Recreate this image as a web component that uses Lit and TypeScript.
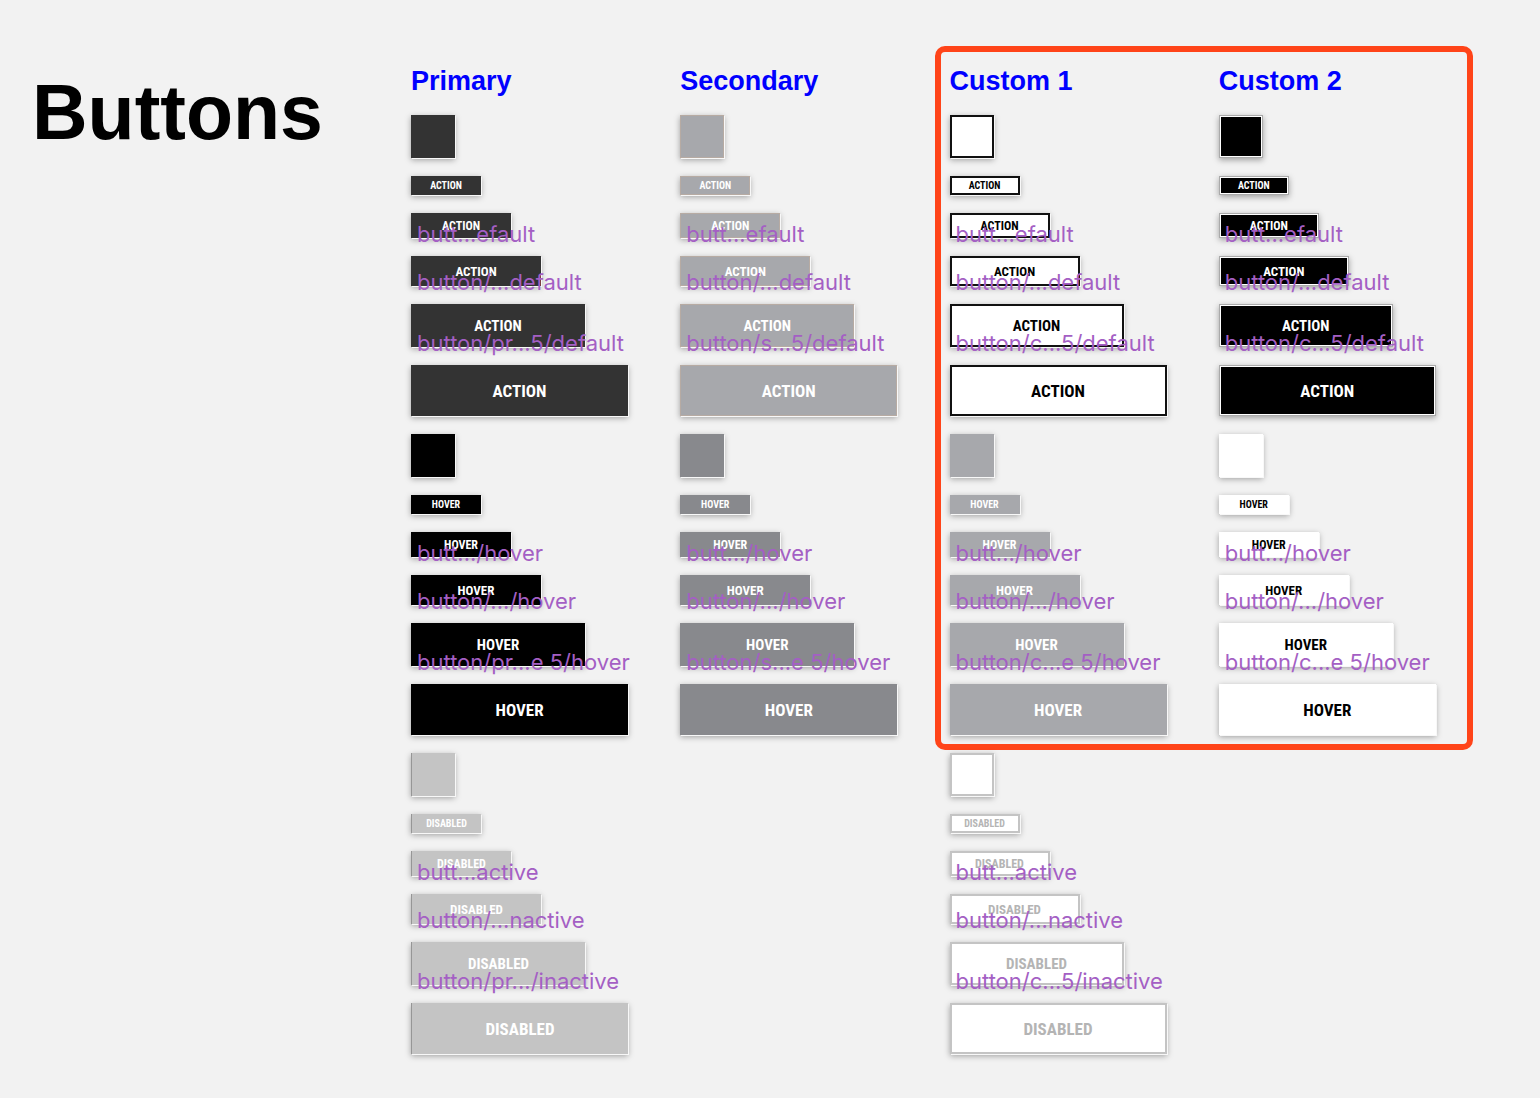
import { LitElement, html, css, nothing } from "lit";
import { customElement, property } from "lit/decorators.js";

type Variant = "primary" | "secondary" | "custom1" | "custom2";
type State = "default" | "hover" | "inactive";

interface Group {
  variant: Variant;
  state: State;
  text: string;
  /** Names of the third, fourth and fifth button, shortened. */
  names: string[];
}

const headings = ["Primary", "Secondary", "Custom 1", "Custom 2"];

const group = (variant: Variant, state: State, text: string, last: string): Group => {
  const names: Record<State, string[]> = {
    default: ["butt...efault", "button/...default"],
    hover: ["butt.../hover", "button/.../hover"],
    inactive: ["butt...active", "button/...nactive"],
  };
  return { variant, state, text, names: [...names[state], last] };
};

const groups: Group[] = [
  group("primary", "default", "ACTION", "button/pr...5/default"),
  group("secondary", "default", "ACTION", "button/s...5/default"),
  group("custom1", "default", "ACTION", "button/c...5/default"),
  group("custom2", "default", "ACTION", "button/c...5/default"),
  group("primary", "hover", "HOVER", "button/pr...e 5/hover"),
  group("secondary", "hover", "HOVER", "button/s...e 5/hover"),
  group("custom1", "hover", "HOVER", "button/c...e 5/hover"),
  group("custom2", "hover", "HOVER", "button/c...e 5/hover"),
  group("primary", "inactive", "DISABLED", "button/pr.../inactive"),
  group("custom1", "inactive", "DISABLED", "button/c...5/inactive"),
];

@customElement("button-stack")
class ButtonStack extends LitElement {
  @property({ attribute: false }) data!: Group;

  static styles = css`
    :host {
      display: block;
    }
    .stack {
      display: flex;
      flex-direction: column;
      align-items: flex-start;
      gap: 18px;
    }
    .slot {
      position: relative;
      display: flex;
    }
    .name {
      position: absolute;
      left: 6px;
      bottom: -11px;
      font: 400 22px/30px Inter, sans-serif;
      color: #a45fc4;
      white-space: nowrap;
      pointer-events: none;
    }
    .btn {
      display: flex;
      align-items: center;
      justify-content: center;
      box-sizing: border-box;
      margin: 0;
      padding: 0;
      border: 0;
      border-radius: 0;
      font-family: "Roboto Condensed", Roboto, sans-serif;
      font-weight: 700;
      color: #fff;
      box-shadow: 1px 1px 0 #f8f8f8, 0 2px 6px rgba(0, 0, 0, 0.35);
    }
    .size0 { width: 44px; height: 43px; }
    .size1 { width: 70px; height: 19px; font-size: 10px; }
    .size2 { width: 100px; height: 25px; font-size: 12px; }
    .size3 { width: 130px; height: 30px; font-size: 13px; }
    .size4 { width: 174px; height: 43px; font-size: 15px; }
    .size5 { width: 217px; height: 51px; font-size: 17px; }

    .primary.default { background: #333; }
    .primary.hover { background: #000; }
    .primary.inactive { background: #c4c4c4; border-left: 1px solid #969696; }
    .secondary.default { background: #a7a8ac; border: 1px solid #b7aba3; }
    .secondary.hover { background: #88898d; }
    .custom1.default { background: #fff; color: #000; border: 2px solid #111; }
    .custom1.hover { background: #a7a8ac; }
    .custom1.inactive { background: #fff; color: #b4b4b4; border: 2px solid #c4c4c4; }
    .custom2.default {
      background: #000;
      border: 1px solid #aaa;
      box-shadow: inset 0 0 0 1px #fff, 0 2px 6px rgba(0, 0, 0, 0.35);
    }
    .custom2.hover { background: #fff; color: #000; }
  `;

  render() {
    const { variant, state, text, names } = this.data;
    return html`<div class="stack">
      ${[0, 1, 2, 3, 4, 5].map((size) => {
        const name = names[size - 2];
        return html`<div class="slot">
          <button
            type="button"
            class="btn size${size} ${variant} ${state}"
            aria-label=${size === 0 ? `${variant} ${state}` : nothing}
            ?disabled=${state === "inactive"}
          >${size === 0 ? nothing : text}</button>
          ${name ? html`<span class="name">${name}</span>` : nothing}
        </div>`;
      })}
    </div>`;
  }
}

@customElement("app-root")
class AppRoot extends LitElement {
  static styles = css`
    :host {
      display: block;
      min-height: 100vh;
      box-sizing: border-box;
      background: #f2f2f2;
      font-family: "Liberation Sans", sans-serif;
    }
    .page {
      display: grid;
      grid-template-columns: 378px minmax(0, 1fr);
      padding: 65px 52px 40px 32px;
      column-gap: 1px;
    }
    .title {
      margin: 3px 0 0;
      font-size: 77px;
      line-height: 88px;
      font-weight: 700;
      color: #000;
    }
    .board {
      display: grid;
      grid-template-columns: repeat(4, minmax(0, 1fr));
      row-gap: 18px;
    }
    .heading {
      margin: 0;
      font-size: 27px;
      line-height: 32px;
      font-weight: 700;
      color: #00f;
    }
    .frame {
      grid-column: 3 / 5;
      grid-row: 1 / 4;
      margin: -19px 15px -15px -15px;
      border: 6px solid #ff4419;
      border-radius: 10px;
      pointer-events: none;
    }
    .h0 { grid-area: 1 / 1; }
    .h1 { grid-area: 1 / 2; }
    .h2 { grid-area: 1 / 3; }
    .h3 { grid-area: 1 / 4; }
    .default { grid-row: 2; }
    .hover { grid-row: 3; }
    .inactive { grid-row: 4; }
    .primary { grid-column: 1; }
    .secondary { grid-column: 2; }
    .custom1 { grid-column: 3; }
    .custom2 { grid-column: 4; }
  `;

  render() {
    return html`<main class="page">
      <h1 class="title">Buttons</h1>
      <section class="board">
        ${headings.map((text, i) => html`<h2 class="heading h${i}">${text}</h2>`)}
        ${groups.map(
          (g) => html`<button-stack class="${g.variant} ${g.state}" .data=${g}></button-stack>`
        )}
        <div class="frame"></div>
      </section>
    </main>`;
  }
}
